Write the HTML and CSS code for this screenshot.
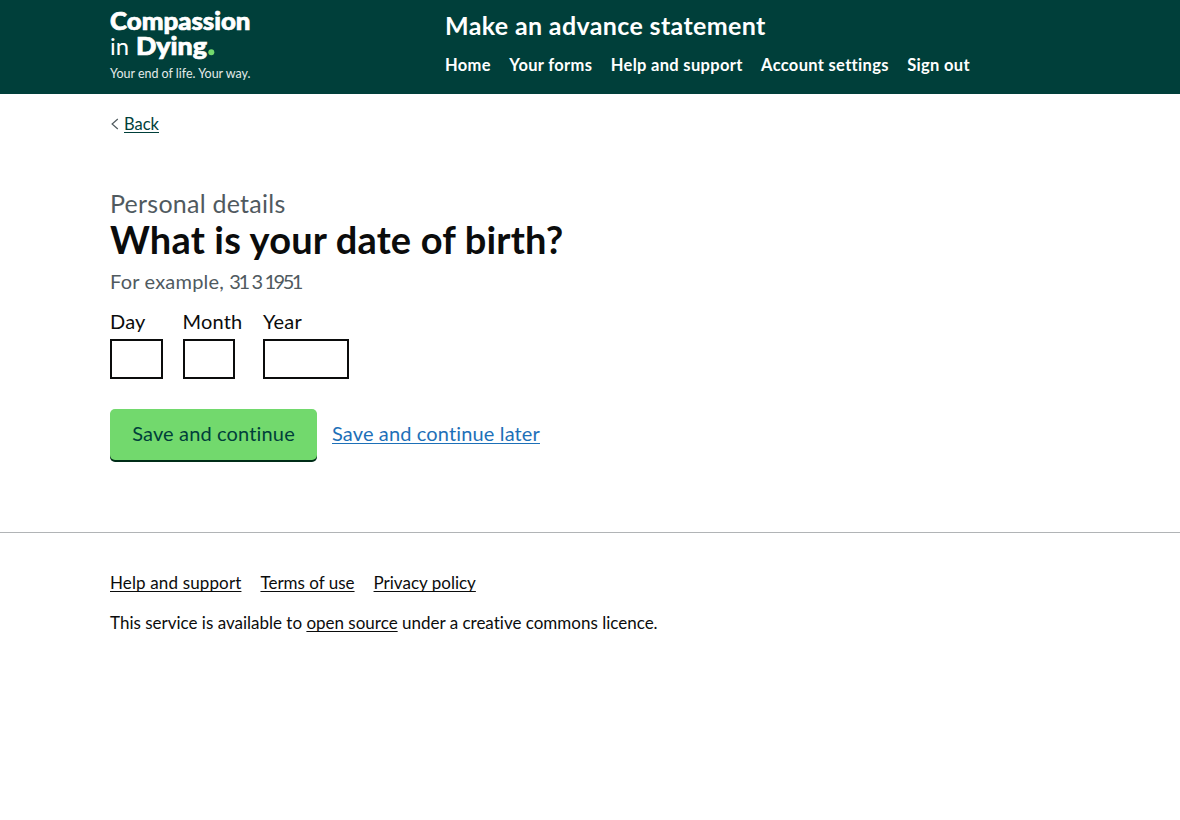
FILE: index.html
```html
<!DOCTYPE html>
<html lang="en">
<head>
<meta charset="utf-8">
<title>What is your date of birth? - Make an advance statement</title>
<link rel="stylesheet" href="styles.css">
</head>
<body>
<header class="header">
  <div class="container header-row">
    <a class="logo" href="#" aria-label="Compassion in Dying">
      <svg width="142" height="74" viewBox="0 0 142 74">
        <text class="logo-bold" x="0" y="22" textLength="140.500" lengthAdjust="spacingAndGlyphs">Compassion</text>
        <text class="logo-light" x="0" y="47" textLength="19" lengthAdjust="spacingAndGlyphs">in</text>
        <text class="logo-bold" x="26" y="47" textLength="71" lengthAdjust="spacingAndGlyphs">Dying</text>
        <circle class="logo-dot" cx="101.3" cy="44.2" r="3"/>
        <text class="logo-tag" x="0" y="69.5" textLength="140.500" lengthAdjust="spacingAndGlyphs">Your end of life. Your way.</text>
      </svg>
    </a>
    <div class="header-content">
      <a class="service-name" href="#">Make an advance statement</a>
      <nav class="nav">
        <a href="#">Home</a><a href="#">Your forms</a><a href="#">Help and support</a><a href="#">Account settings</a><a href="#">Sign out</a>
      </nav>
    </div>
  </div>
</header>
<div class="container">
  <div class="back"><svg width="8" height="12" viewBox="0 0 8 12"><path d="M6.800 1 1.100 6l5.700 5"/></svg><a href="#">Back</a></div>
  <main class="main">
    <span class="caption">Personal details</span>
    <h1 class="title">What is your date of birth?</h1>
    <div class="hint">For example, <span class="example-date">31 3 1951</span></div>
    <form>
      <div class="date">
        <div class="field"><label for="day">Day</label><input id="day" type="text"></div>
        <div class="field field-month"><label for="month">Month</label><input id="month" type="text"></div>
        <div class="field field-year"><label for="year">Year</label><input id="year" type="text"></div>
      </div>
      <div class="actions">
        <button class="button" type="button">Save and continue</button>
        <a class="later" href="#">Save and continue later</a>
      </div>
    </form>
  </main>
</div>
<footer class="footer">
  <div class="container">
    <div class="footer-links"><a class="footer-help" href="#">Help and support</a><a href="#">Terms of use</a><a href="#">Privacy policy</a></div>
    <p class="licence">This service is available to <a href="#">open source</a> under a creative commons licence.</p>
  </div>
</footer>
</body>
</html>
```
FILE: styles.css
```css
* { box-sizing: border-box; }
body { margin: 0; background: #fff; color: #0b0c0c; font-family: Lato, "Open Sans", sans-serif; font-variant-ligatures: none; }
a { color: inherit; text-decoration-thickness: 1px; text-underline-offset: 2px; text-decoration-skip-ink: none; }
.container { width: 960px; margin: 0 auto; }
.header { height: 94px; background: #003f3a; color: #fff; }
.header-row { display: flex; }
.logo { width: 335px; padding-top: 8px; }
.logo svg { display: block; overflow: visible; }
.logo-bold { fill: #fff; stroke: #fff; stroke-width: 0.7; font-size: 24px; font-weight: 900; }
.logo-light { fill: #fff; font-size: 24px; font-weight: 400; }
.logo-tag { fill: #e4ebea; font-size: 13px; }
.logo-dot { fill: #72d96d; }
.header-content { padding-top: 10px; }
.service-name { display: block; font-size: 25px; line-height: 30px; font-weight: 700; letter-spacing: 0.36px; text-decoration: none; white-space: nowrap; }
.nav { display: flex; gap: 18.500px; margin-top: 15px; font-size: 16.500px; line-height: 20px; font-weight: 700; letter-spacing: 0.31px; white-space: nowrap; }
.nav a { text-decoration: none; }
.back { display: flex; align-items: center; gap: 5px; padding: 20px 0 0 1px; font-size: 16.500px; line-height: 20px; color: #003f3a; }
.back svg { fill: none; stroke: #505a5f; stroke-width: 1.2; }
.main { padding-top: 54px; height: 398px; }
.caption { display: block; font-size: 25px; line-height: 30px; letter-spacing: 0.25px; color: #505a5f; }
.title { margin: 0; font-size: 38px; line-height: 42px; font-weight: 700; letter-spacing: 0.18px; }
.hint { margin-top: 9px; font-size: 20px; line-height: 25px; letter-spacing: 0.2px; color: #505a5f; }
.example-date { letter-spacing: -2.500px; word-spacing: 1.300px; }
.date { display: flex; margin-top: 15px; }
.field { width: 72.500px; }
.field-month { width: 80.500px; }
.field-year { width: 86px; }
.field label { display: block; font-size: 20px; line-height: 25px; letter-spacing: 0.2px; }
.field input { display: block; width: 52.500px; height: 40px; margin: 5px 0 0; border: 2px solid #0b0c0c; border-radius: 0; padding: 5px; }
.field-year input { width: 86px; }
.actions { display: flex; align-items: center; gap: 15px; margin-top: 30px; }
.button { width: 207px; height: 51px; margin: 0; padding: 0 0 2px; border: 0; border-radius: 5px; background: #72d96d; box-shadow: 0 2px 0 #002d18; color: #003f3a; font: 20px/25px Lato, sans-serif; font-variant-ligatures: none; letter-spacing: 0.15px; }
.later { padding-bottom: 2px; font-size: 20px; line-height: 25px; letter-spacing: 0.14px; color: #1d70b8; }
.footer { border-top: 1px solid #b1b4b6; padding-top: 40px; font-size: 17px; line-height: 20px; }
.footer-links { display: flex; gap: 19px; }
.footer-help { letter-spacing: 0.14px; }
.licence { margin: 20px 0 0; }
```
